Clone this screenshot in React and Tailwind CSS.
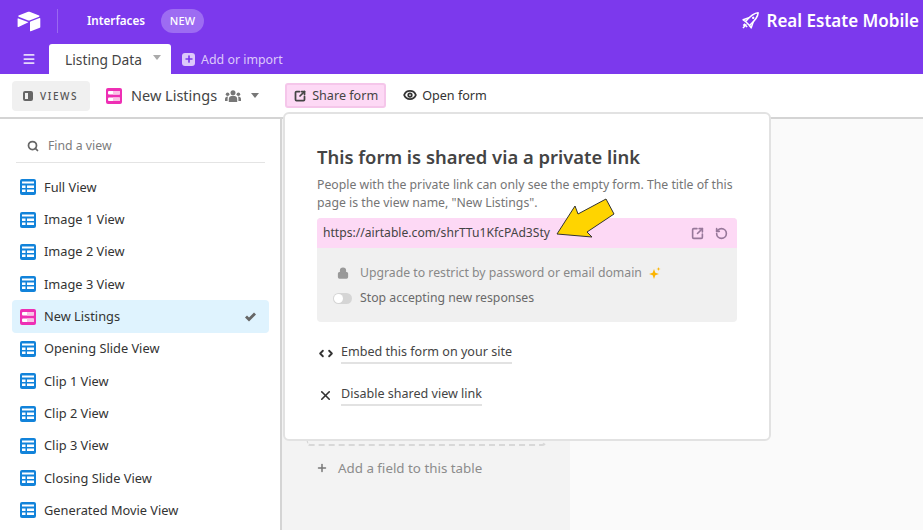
import React from 'react';
import { Search, Plus, X, Lock, SquareArrowOutUpRight, RotateCcw, Eye, Menu, ChevronLeft, ChevronRight } from 'lucide-react';

const views = ['Full View', 'Image 1 View', 'Image 2 View', 'Image 3 View', 'New Listings', 'Opening Slide View', 'Clip 1 View', 'Clip 2 View', 'Clip 3 View', 'Closing Slide View', 'Generated Movie View'];

function GridIcon() {
  return (
    <svg width="16" height="16" viewBox="0 0 16 16" className="shrink-0">
      <rect x="0" y="0" width="16" height="16" rx="2" fill="#1283da" />
      <rect x="2" y="2.5" width="12" height="2" fill="#fff" />
      <rect x="2" y="6.5" width="3.5" height="2.5" fill="#fff" />
      <rect x="7" y="6.5" width="7" height="2.5" fill="#fff" />
      <rect x="2" y="10.5" width="3.5" height="2.5" fill="#fff" />
      <rect x="7" y="10.5" width="7" height="2.5" fill="#fff" />
    </svg>
  );
}

function FormIcon({ size = 16 }) {
  return (
    <svg width={size} height={size} viewBox="0 0 16 16" className="shrink-0">
      <rect x="0" y="0" width="16" height="16" rx="2" fill="#ee2fb4" />
      <rect x="2" y="3" width="12" height="3.5" rx="1" fill="#fff" />
      <rect x="2" y="9.5" width="12" height="3.5" rx="1" fill="#fff" />
      <rect x="7" y="3" width="7" height="3.5" fill="#f9c3e6" />
      <rect x="7" y="9.5" width="7" height="3.5" fill="#f9c3e6" />
    </svg>
  );
}

function Logo() {
  return (
    <svg width="24" height="21" viewBox="0 0 24 21">
      <path d="M10.5 1 1.6 4.6c-.5.2-.5.9 0 1.1l9 3.5c.8.3 1.7.3 2.5 0l9-3.5c.5-.2.5-.9 0-1.1L13.2 1c-.9-.3-1.800-.3-2.700 0Z" fill="#fff" />
      <path d="M13 11.2v8.600c0 .4.400.7.800.5l9-3.500c.3-.1.500-.4.500-.7V7.500c0-.4-.4-.7-.8-.5l-9 3.500c-.3.100-.5.400-.5.700Z" fill="#fff" />
      <path d="M11 11.4 8.300 12.700 1.500 16c-.4.200-.9-.1-.9-.5V7.800c0-.2.100-.3.200-.4.100-.1.200-.1.300-.1l.3.100 9.500 3.700c.3.200.4.600.100.800Z" fill="#fff" />
    </svg>
  );
}

function RocketIcon() {
  return (
    <svg width="18" height="18" viewBox="0 0 18 18" fill="none" stroke="#fff" strokeWidth="1.5" strokeLinejoin="round">
      <g transform="rotate(45 9 9)">
        <path d="M9 -2.5C11.800 .5 12.300 5 11.800 12.500H6.200C5.700 5 6.200 .5 9 -2.500Z" />
        <circle cx="9" cy="4.5" r="1.2" fill="#fff" stroke="none" />
        <path d="M6 7.500 3.300 13 6.200 12.500M12 7.500 14.700 13 11.800 12.500" />
        <path d="M7.500 14.500V17M10.500 14.500V16M9 14V19" />
      </g>
    </svg>
  );
}

function PeopleIcon() {
  return (
    <svg width="16" height="12" viewBox="0 0 16 12" fill="#777" className="ml-[8px]">
      <circle cx="8" cy="2.7" r="2.5" />
      <path d="M3.800 12V9c0-2 1.800-3.200 4.200-3.200s4.200 1.200 4.200 3.200v3Z" />
      <circle cx="2.6" cy="4.2" r="1.8" />
      <circle cx="13.4" cy="4.2" r="1.8" />
      <path d="M0 11V9c0-1.500 1-2.500 3-2.500-.3.700-.4 1.500-.4 2.500v2ZM16 11V9c0-1.500-1-2.500-3-2.500.3.700.4 1.500.4 2.500v2Z" />
    </svg>
  );
}

function CheckMark() {
  return (
    <svg width="11" height="10" viewBox="0 0 11 10" fill="#666">
      <path d="M0 5.500 2 3.500 4 5.500 9 .5 11 2.500 4 9.500Z" />
    </svg>
  );
}

function Sidebar() {
  return (
    <aside className="w-[282px] shrink-0 bg-white border-r-2 border-[#d4d4d4] pl-3 pr-3 pt-[10px] flex flex-col">
      <div className="flex items-center ml-1 mr-[3px] h-[34px] border-b border-[#e4e4e4] pl-[11px] pt-px gap-[9px] text-[12.25px] text-[#7c7c7c]">
        <Search size={12} strokeWidth={3.5} color="#666" />
        <span>Find a view</span>
      </div>
      <div className="mt-[8.3px] flex flex-col">
        {views.map((v) => {
          const active = v === 'New Listings';
          return (
            <div key={v} className={`h-[32.3px] shrink-0 flex items-center pl-2 pr-[13px] gap-2 w-[257px] rounded text-[12.8px] text-[#333] ${active ? 'bg-[#dff3fe]' : ''}`}>
              {active ? <FormIcon /> : <GridIcon />}
              <span className="flex-1">{v}</span>
              {active && <CheckMark />}
            </div>
          );
        })}
      </div>
    </aside>
  );
}

function SharePopover() {
  return (
    <div className="absolute left-[283px] top-[112px] w-[488px] h-[329px] bg-white border-2 border-[#e2e2e2] rounded-md pl-[32px] pr-[32px] pt-[31px]">
      <h2 className="text-[18.4px] leading-[24px] font-semibold text-[#444]">This form is shared via a private link</h2>
      <p className="mt-[7px] text-[12.25px] leading-[18px] text-[#757575]">
        People with the private link can only see the empty form. The title of this page is the view name, "New Listings".
      </p>
      <div className="mt-[6px] rounded bg-[#f0f0f0]">
        <div className="h-[30px] rounded-t bg-[#fdd9f5] flex items-center pl-[6px] pr-[9px] text-[12.13px] text-[#444]">
          <span className="flex-1">https://airtable.com/shrTTu1KfcPAd3Sty</span>
          <SquareArrowOutUpRight size={13} strokeWidth={3} color="#97789a" />
          <RotateCcw size={13} strokeWidth={3} color="#97789a" className="ml-[11px]" />
        </div>
        <div className="h-[74px] pl-[15px] pt-[15px] text-[12.25px] text-[#888]">
          <div className="flex items-center h-[20px]">
            <span className="w-[28px] pl-[5px]"><Lock size={12} fill="#999" color="#999" strokeWidth={2.5} /></span>
            <span>Upgrade to restrict by password or email domain</span>
            <svg width="13" height="13" viewBox="0 0 13 13" className="ml-[6px]">
              <path d="M6 2 7.300 5.700 11 7 7.300 8.300 6 12 4.700 8.300 1 7 4.700 5.700Z" fill="#fcb400" />
              <path d="M10.500 0 11 1.500 12.500 2 11 2.500 10.500 4 10 2.500 8.500 2 10 1.500Z" fill="#fcb400" />
            </svg>
          </div>
          <div className="mt-[5px] flex items-center h-[20px] text-[#6a6a6a]">
            <span className="w-[28px] pl-px">
              <span className="flex items-center w-[19px] h-[11px] rounded-full bg-[#d5d5d5] pl-[1px]">
                <span className="w-[9px] h-[9px] rounded-full bg-white" />
              </span>
            </span>
            <span>Stop accepting new responses</span>
          </div>
        </div>
      </div>
      <div className="mt-[20px] flex items-center h-[22px] text-[12.55px] text-[#444]">
        <span className="w-[24px] flex -space-x-[2px] -ml-px">
          <ChevronLeft size={11} strokeWidth={4} color="#333" />
          <ChevronRight size={11} strokeWidth={4} color="#333" />
        </span>
        <span className="border-b-2 border-[#e2e2e2] leading-[20px] ml-px">Embed this form on your site</span>
      </div>
      <div className="mt-[20px] flex items-center h-[22px] text-[12.55px] text-[#444]">
        <span className="w-[24px] pl-[1px]"><X size={15} strokeWidth={2.5} color="#333" /></span>
        <span className="border-b-2 border-[#e2e2e2] leading-[20px]">Disable shared view link</span>
      </div>
    </div>
  );
}

export default function App() {
  return (
    <div className="relative w-[923px] h-[530px] overflow-hidden bg-white font-['Noto_Sans',sans-serif]">
      {/* purple header */}
      <div className="h-[74px] bg-[#7c39ed] text-white">
        <div className="h-[42px] flex items-center pl-[17px] pr-[4px]">
          <Logo />
          <div className="ml-[16px] w-px h-[24px] bg-[#9a68f1]" />
          <span className="ml-[29px] text-[11.7px] font-semibold">Interfaces</span>
          <span className="ml-[16px] w-[43px] h-[24px] rounded-full bg-[#9d6cf2] flex items-center justify-center text-[11px] font-medium tracking-wide">NEW</span>
          <div className="ml-auto flex items-center gap-[7px]">
            <RocketIcon />
            <span className="text-[17px] font-semibold">Real Estate Mobile</span>
          </div>
        </div>
        <div className="h-[32px] flex items-center pl-[22px] pt-[2px]">
          <Menu size={14} strokeWidth={3} color="#e6d9fb" />
          <div className="ml-[13px] self-end h-[30px] w-[122px] bg-white rounded-t-[3px] flex items-center pl-[16px] pt-[2px] text-[13.8px] text-[#444] relative">
            Listing Data
            <span className="absolute right-[10px] top-[11px] w-0 h-0 border-x-[4px] border-x-transparent border-t-[5px] border-t-[#aaa]" />
          </div>
          <span className="ml-[11px] w-[13px] h-[13px] rounded-[3px] bg-[#dcc9fa] flex items-center justify-center">
            <Plus size={10} strokeWidth={4} color="#7c39ed" />
          </span>
          <span className="ml-[6px] pt-[2px] text-[12.4px] text-[#dcc9fa]">Add or import</span>
        </div>
      </div>

      {/* toolbar */}
      <div className="h-[45px] border-b-2 border-[#d4d4d4] flex items-center pl-3 bg-white">
        <div className="w-[78px] h-[30px] rounded bg-[#f0f0f0] flex items-center pl-[11px] gap-[7px] text-[10px] font-medium tracking-[0.16em] text-[#555]">
          <span className="w-[10px] h-[10px] rounded-[2px] border-2 border-[#666] border-r-[5px]" />
          <span className="pt-px">VIEWS</span>
        </div>
        <div className="ml-[16px]"><FormIcon /></div>
        <span className="ml-[9px] text-[14.5px] text-[#444]">New Listings</span>
        <PeopleIcon />
        <span className="ml-[10px] w-0 h-0 border-x-[4px] border-x-transparent border-t-[5px] border-t-[#777]" />
        <div className="ml-[26px] w-[101px] h-[25px] rounded-[3px] bg-[#fdd9f5] border-2 border-[#f5c6ea] flex items-center pl-[7px] gap-[6px] text-[12.6px] text-[#444]">
          <SquareArrowOutUpRight size={12} strokeWidth={3.5} color="#444" />
          <span className="pt-[2px]">Share form</span>
        </div>
        <div className="ml-[17px] flex items-center gap-[5px] text-[12.6px] text-[#333]">
          <Eye size={14} strokeWidth={3} color="#333" />
          <span className="pt-[2px]">Open form</span>
        </div>
      </div>

      {/* body */}
      <div className="flex h-[411px]">
        <Sidebar />
        <main className="flex-1 flex bg-[#fafafa]">
          <div className="w-[288px] bg-[#f3f3f3] pl-[24px] pt-[322px]">
            <div className="w-[240px] h-[5px] border-b-2 border-x-2 border-dashed border-[#d8d8d8] rounded-b" />
            <div className="mt-[12px] ml-[10px] flex items-center gap-[10px] text-[13.35px] text-[#8c8c8c]">
              <Plus size={12} strokeWidth={3} color="#777" />
              Add a field to this table
            </div>
          </div>
        </main>
      </div>

      <SharePopover />

      {/* yellow annotation arrow */}
      <svg width="62" height="44" viewBox="0 0 62 44" className="absolute left-[555px] top-[197px]">
        <path d="M2 37 20 9 23 17 51 2 59 17 32 35 37 40Z" fill="#ffd400" stroke="#333" strokeWidth="1" strokeLinejoin="round" />
      </svg>
    </div>
  );
}
